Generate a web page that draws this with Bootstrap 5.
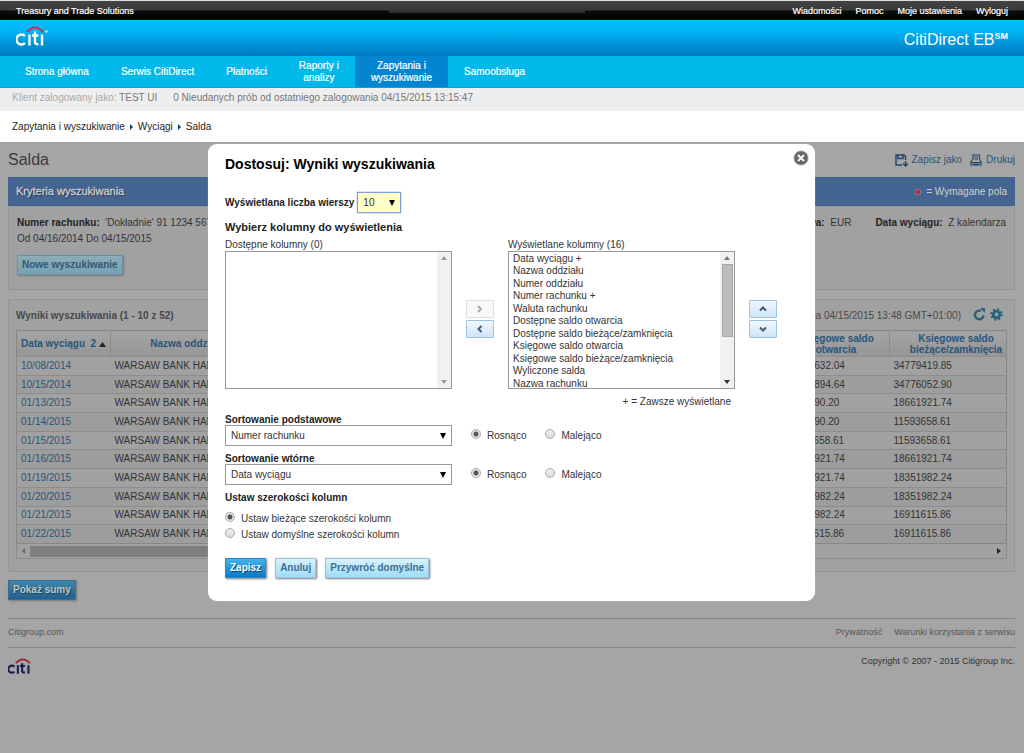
<!DOCTYPE html>
<html lang="pl">
<head>
<meta charset="utf-8">
<meta name="viewport" content="width=device-width, initial-scale=1">
<title>CitiDirect EB – Salda</title>
<link href="https://cdn.jsdelivr.net/npm/bootstrap@5.3.0/dist/css/bootstrap.min.css" rel="stylesheet">
<style>
body{font:11px/14px "Liberation Sans",Arial,sans-serif;color:#333;background:#a5a5a5}
a{text-decoration:none;color:inherit}
h1,h2,h3{margin:0}
.topbar{height:20px;border-top:1px solid #ddd;padding:0 16px;color:#fff;font-size:9px;line-height:20px;-webkit-text-stroke:.2px #fff;
 background:linear-gradient(#3a3a3a,#2a2a2a) 47% 9px/196px 3px no-repeat,linear-gradient(#444,#3a3a3a 45%,#0c0c0c 55%,#000)}
.brandbar{height:36px;padding:0 16px;color:#fff;background:linear-gradient(#00bfff,#00b4f5 30%,#0077c0)}
.product{font-size:16px;line-height:40px}
.product sup{font-size:9px;top:-6px;font-weight:700}
.mainnav{min-height:32px;background:#00b9ea;border-bottom:1px solid #00a5e0;color:#fff;padding-left:9px}
.mainnav a{display:flex;align-items:center;text-align:center;font-size:10px;line-height:12px;padding:1px 16px 0;-webkit-text-stroke:.2px #fff}
.mainnav a.active{background:#0485d1}
.loginbar{height:23px;background:#eee;color:#777;font-size:10px;line-height:20px;padding:0 12px}
.crumbs{height:32px;background:#fff;color:#222;font-size:10px;line-height:31px;padding:0 12px;border-bottom:1px solid #a0a0a0}
.crumbs svg{margin:0 5px}
.workspace{padding:0 9px 0 8px}
.page-title{font-size:16px;line-height:34px;color:#3c3c3c;font-weight:400}
.tools{color:#2b5478;font-size:10px}
.blue-head{height:29px;background:#446592;color:#d0d0d0;padding:0 8px;font-size:11px;line-height:28px}
.blue-head h2{font-size:11px;line-height:28px;font-weight:400;text-shadow:1px 1px 1px #223;-webkit-text-stroke:.3px #d0d0d0}
.pane{border:1px solid #959595;background:#a1a1a1;padding:8px}
.criteria{min-height:84px;font-size:10px;line-height:16px}
.criteria b{color:#222}
.act{font:bold 10px/16px "Liberation Sans",Arial,sans-serif;border:1px solid #9ac4dd;border-radius:0;padding:1px 4px;height:20px;color:#3f6f91;background:linear-gradient(#d8f2fd,#9fdcf8);box-shadow:1px 1px 2px #777}
.act-main{color:#fff;border-color:#2a8ccc;background:linear-gradient(#43b3ee,#0a78c6);text-shadow:1px 1px 1px #045}
.dim{color:#35586e;border-color:#6f8f9f;background:linear-gradient(#8cacb8,#73a3b5)}
.dim.act-main{color:#c6c6c6;border-color:#356f94;background:linear-gradient(#3f86ab,#245f8c)}
.results{margin-top:9px;min-height:273px;padding:7px}
.results-head{height:23px;font-size:10px;line-height:17px;color:#484848}
.results-head h2{font-size:10px;font-weight:700;line-height:17px}
.grid{width:100%;table-layout:fixed;height:214px;border:1px solid #878787;font-size:10px;line-height:14px;color:#333}
.grid th{height:26px;padding:0;text-align:center;color:#28557c;line-height:11px;background:linear-gradient(#a4a4a4,#969696);border-right:1px solid #8b8b8b}
.grid td{padding:0 4px;border-top:1px solid #8d8d8d;white-space:nowrap;overflow:hidden}
.grid td:first-child{color:#2b5478}
.grid tbody tr:nth-child(even){background:#9d9d9d}
.c-date{width:94px}.c-branch{width:154px}.c-open{width:107px}.c-cur{width:117px}
.grid th:last-child{padding-left:16px}
.hscroll{height:15px;border:1px solid #8b8b8b;border-top:0;padding:0 5px}
.hthumb{height:11px;background:#7f7f7f;width:80%}
.foot{border-top:1px solid #868686;font-size:9px;height:29px;line-height:27px;color:#555}
.dialogbox{position:absolute;top:1px;left:0;right:1px;margin:0 auto;width:607px;max-width:100%;background:#fff;border-radius:9px;box-shadow:0 0 1px #ccc;padding:12px 16px 23px 17px;color:#333;font-size:10px}
.dialogbox h1{font-size:14px;font-weight:700;line-height:16px;color:#000}
.shut{border:0;background:none;padding:0;line-height:0;margin:-6px -10px 0 0}
.dialogbox label,.dialogbox h3{font-size:10px;line-height:14px;font-weight:400;margin:0}
.dialogbox .strong{font-weight:700;color:#222}
.dialogbox .lead-line{font-size:11px}
.pick{appearance:none;border:1px solid #999;border-radius:0;color:#333;font-size:10px;line-height:14px;padding:2px 5px;height:21px;
 background:#fff url("data:image/svg+xml,%3Csvg xmlns='http://www.w3.org/2000/svg' width='6' height='6'%3E%3Cpath d='M0 0h6L3 6z'/%3E%3C/svg%3E") no-repeat right 5px center}
.pick-rows{width:44px;border:1px solid #7fa0d8;background-color:#ffffc8;box-shadow:0 0 1px #4d7fd0}
.wide{width:227px}
.listwrap{width:227px;height:138px;border:1px solid #999}
.listwrap select{appearance:none;border:0;outline:0;overflow:hidden;flex:1;min-width:0;height:136px;padding:1px 0 0;font-size:10px;color:#333;background:#fff}
.listwrap option{padding:0 4px;min-height:12px;line-height:12px}
.listwrap option:nth-child(even){min-height:13px;line-height:13px}
.vscroll{width:14px;background:#f1f1f1}
.vthumb{width:11px;height:73px;background:#bcbcbc;border:1px solid #a8a8a8}
.mover{width:28px;height:18px;border:1px solid #9cc3e6;border-radius:1px;background:linear-gradient(#f2f8fe,#cfe4f8);padding:0;line-height:0;color:#3d5d77}
.mover:disabled{background:#f8f8f8;border-color:#ddd;color:#aaa}
.dot{appearance:none;width:10px;height:10px;border:1px solid #aaa;border-radius:50%;background:linear-gradient(#eee,#ddd);margin:0;flex:none}
.dot:checked{background:radial-gradient(circle,#555 0 2px,#e6e6e6 3px)}
.order .dot{margin:0 6px 4px 19px}
.cap{display:block;height:12px}
</style>
</head>
<body class="d-flex flex-column min-vh-100">
<header>
  <div class="topbar d-flex justify-content-between">
    <span>Treasury and Trade Solutions</span>
    <nav class="d-flex" style="gap:14px"><a href="#">Wiadomości</a><a href="#">Pomoc</a><a href="#">Moje ustawienia</a><a href="#">Wyloguj</a></nav>
  </div>
  <div class="brandbar d-flex justify-content-between">
    <svg width="34" height="24" viewBox="0 0 34 24" class="mt-1" fill="none" stroke="#fff" stroke-width="2.4" role="img" aria-label="citi"><path d="M9 12a5 5 0 1 0 0 7M13.500 10.500v11M19 7.500V18q0 2.500 3.500 2.300M16 11.500h6.500M26 10.500v11"/><path d="M11 8Q19-1 27 8" stroke="#d32f45" stroke-width="2"/><circle cx="30.500" cy="7.500" r=".8" stroke-width="1"/></svg>
    <span class="product">CitiDirect EB<sup>SM</sup></span>
  </div>
  <nav class="mainnav d-flex">
    <a href="#">Strona główna</a><a href="#">Serwis CitiDirect</a><a href="#">Płatności</a><a href="#">Raporty i<br>analizy</a><a href="#" class="active">Zapytania i<br>wyszukiwanie</a><a href="#">Samoobsługa</a>
  </nav>
  <div class="loginbar d-flex gap-3"><span><span style="color:#aaa">Klient zalogowany jako:</span> TEST UI</span><span>0 Nieudanych prób od ostatniego zalogowania 04/15/2015 13:15:47</span></div>
  <nav class="crumbs"><a href="#">Zapytania i wyszukiwanie</a><svg width="3" height="6"><path d="M0 0v6l3-3z" fill="#013a78"/></svg><a href="#">Wyciągi</a><svg width="3" height="6"><path d="M0 0v6l3-3z" fill="#013a78"/></svg><span>Salda</span></nav>
</header>
<main class="workspace position-relative flex-grow-1">
  <div class="d-flex justify-content-between align-items-center">
    <h1 class="page-title">Salda</h1>
    <div class="tools d-flex gap-2">
      <a href="#" class="d-flex align-items-center gap-1"><svg width="13" height="13" fill="none" stroke="#24476a" stroke-width="1.500"><path d="M7 11H1V1h8l1.500 1.500V6M3 1v3.500h5V1M10.500 7v5M8 9.500l2.500 2.500 2.300-2.500"/></svg>Zapisz jako</a>
      <a href="#" class="d-flex align-items-center gap-1"><svg width="12" height="12" fill="none" stroke="#24476a" stroke-width="1.200"><path d="M3 6V1h6.500v5M4.500 3H8M4.500 5H8M2 6L1 8v3h10V8l-1-2M1 8.500h10M3 10h6"/></svg>Drukuj</a>
    </div>
  </div>
  <section>
    <div class="blue-head d-flex justify-content-between">
      <h2>Kryteria wyszukiwania</h2>
      <span style="font-size:10px" class="d-flex align-items-center gap-1"><svg width="8" height="8"><circle cx="4" cy="4" r="3.500" fill="#76708c"/><circle cx="4" cy="4" r="2" fill="#a82f42"/></svg>= Wymagane pola</span>
    </div>
    <div class="pane criteria">
      <div class="d-flex justify-content-between">
        <div><b>Numer rachunku:</b>&nbsp; 'Dokładnie' 91 1234 567<br>Od 04/16/2014 Do 04/15/2015</div>
        <div class="d-flex gap-4"><span><b>Waluta bazowa:</b>&nbsp; EUR</span><span><b>Data wyciągu:</b>&nbsp; Z kalendarza</span></div>
      </div>
      <button type="button" class="act dim mt-2">Nowe wyszukiwanie</button>
    </div>
  </section>
  <section class="pane results">
    <div class="results-head d-flex justify-content-between">
      <h2>Wyniki wyszukiwania (1 - 10 z 52)</h2>
      <div class="d-flex gap-1 align-items-start"><span class="me-2">(dane na 04/15/2015 13:48 GMT+01:00)</span>
        <svg width="13" height="14" fill="none" stroke="#245f7c" stroke-width="2.400"><path d="M10.500 8.500A4.300 4.300 0 1 1 8 4"/><path d="M7 1l5 0v5z" fill="#245f7c" stroke="none"/></svg>
        <svg width="13" height="14" fill="none" stroke="#245f7c" class="me-1"><circle cx="6.500" cy="7.500" r="3.200" stroke-width="2.600"/><circle cx="6.500" cy="7.500" r="5.200" stroke-width="2" stroke-dasharray="2 2.080"/></svg>
      </div>
    </div>
    <table class="grid">
      <colgroup><col class="c-date"><col class="c-branch"><col><col class="c-open"><col class="c-cur"></colgroup>
      <thead><tr><th>Data wyciągu &nbsp;2 <svg width="7" height="5"><path d="M0 5h7L3.500 0z" fill="#222"/></svg></th><th>Nazwa oddziału</th><th></th><th>Księgowe saldo otwarcia</th><th>Księgowe saldo bieżące/zamknięcia</th></tr></thead>
      <tbody>
        <tr><td>10/08/2014</td><td>WARSAW BANK HAN</td><td></td><td>34776632.04</td><td>34779419.85</td></tr>
        <tr><td>10/15/2014</td><td>WARSAW BANK HAN</td><td></td><td>34776894.64</td><td>34776052.90</td></tr>
        <tr><td>01/13/2015</td><td>WARSAW BANK HAN</td><td></td><td>1866190.20</td><td>18661921.74</td></tr>
        <tr><td>01/14/2015</td><td>WARSAW BANK HAN</td><td></td><td>1866190.20</td><td>11593658.61</td></tr>
        <tr><td>01/15/2015</td><td>WARSAW BANK HAN</td><td></td><td>11593658.61</td><td>11593658.61</td></tr>
        <tr><td>01/16/2015</td><td>WARSAW BANK HAN</td><td></td><td>18661921.74</td><td>18661921.74</td></tr>
        <tr><td>01/19/2015</td><td>WARSAW BANK HAN</td><td></td><td>18661921.74</td><td>18351982.24</td></tr>
        <tr><td>01/20/2015</td><td>WARSAW BANK HAN</td><td></td><td>18351982.24</td><td>18351982.24</td></tr>
        <tr><td>01/21/2015</td><td>WARSAW BANK HAN</td><td></td><td>18351982.24</td><td>16911615.86</td></tr>
        <tr><td>01/22/2015</td><td>WARSAW BANK HAN</td><td></td><td>16911615.86</td><td>16911615.86</td></tr>
      </tbody>
    </table>
    <div class="hscroll d-flex align-items-center justify-content-between"><svg width="4" height="6"><path d="M3 0v6L0 3z" fill="#666"/></svg><div class="hthumb me-auto ms-1"></div><svg width="4" height="6"><path d="M0 0v6l4-3z" fill="#222"/></svg></div>
  </section>
  <button type="button" class="act act-main dim mt-2">Pokaż sumy</button>
  <footer style="margin-top:18px">
    <div class="foot d-flex justify-content-between"><a href="#">Citigroup.com</a><span class="d-flex" style="gap:12px"><a href="#">Prywatność</a><a href="#">Warunki korzystania z serwisu</a></span></div>
    <div class="foot d-flex justify-content-between" style="color:#333">
      <svg width="24" height="20" viewBox="0 0 34 26" class="mt-2" fill="none" stroke="#1c1f4a" stroke-width="3" role="img" aria-label="citi"><path d="M9 14a5 5 0 1 0 0 7M14 12v12M20 9v11q0 2.500 4 2.300M17 13h7M29 12v12"/><path d="M11 9Q21-2 31 9" stroke="#a0283a" stroke-width="2.500"/></svg>
      <span>Copyright © 2007 - 2015 Citigroup Inc.</span>
    </div>
  </footer>

  <div class="dialogbox" role="dialog" aria-labelledby="dlg-title">
    <div class="d-flex justify-content-between align-items-start">
      <h1 id="dlg-title">Dostosuj: Wyniki wyszukiwania</h1>
      <button type="button" class="shut" aria-label="Zamknij"><svg width="16" height="16"><circle cx="8" cy="8" r="7" fill="#666" stroke="#999"/><path d="M5 5l6 6M11 5l-6 6" stroke="#fff" stroke-width="2"/></svg></button>
    </div>
    <div class="d-flex align-items-center" style="margin-top:20px;gap:3px"><label class="strong" for="rows">Wyświetlana liczba wierszy</label><select id="rows" class="pick pick-rows"><option>10</option></select></div>
    <h3 class="strong lead-line" style="margin-top:7px">Wybierz kolumny do wyświetlenia</h3>
    <div class="d-flex" style="margin-top:4px;gap:14px">
      <div><label class="d-block" for="avail" style="height:13px">Dostępne kolumny (0)</label>
        <div class="listwrap d-flex"><select id="avail" size="11"></select><div class="vscroll d-flex flex-column align-items-center justify-content-between py-1"><svg width="6" height="4"><path d="M0 4h6L3 0z" fill="#999"/></svg><svg width="6" height="4"><path d="M0 0h6L3 4z" fill="#999"/></svg></div></div>
      </div>
      <div class="d-flex flex-column" style="gap:2px;padding-top:62px"><button type="button" class="mover" disabled aria-label="Dodaj"><svg width="8" height="8" fill="none" stroke="currentColor" stroke-width="2"><path d="M2 1l3 3-3 3"/></svg></button><button type="button" class="mover" aria-label="Usuń"><svg width="8" height="8" fill="none" stroke="currentColor" stroke-width="2"><path d="M5.500 1l-3 3 3 3"/></svg></button></div>
      <div><label class="d-block" for="shown" style="height:13px">Wyświetlane kolumny (16)</label>
        <div class="listwrap d-flex"><select id="shown" size="11"><option>Data wyciągu +</option><option>Nazwa oddziału</option><option>Numer oddziału</option><option>Numer rachunku +</option><option>Waluta rachunku</option><option>Dostępne saldo otwarcia</option><option>Dostępne saldo bieżące/zamknięcia</option><option>Księgowe saldo otwarcia</option><option>Księgowe saldo bieżące/zamknięcia</option><option>Wyliczone salda</option><option>Nazwa rachunku</option></select><div class="vscroll d-flex flex-column align-items-center py-1"><svg width="6" height="4"><path d="M0 4h6L3 0z" fill="#777"/></svg><div class="vthumb mt-1"></div><svg class="mt-auto" width="6" height="4"><path d="M0 0h6L3 4z" fill="#333"/></svg></div></div>
        <div class="text-end pe-1" style="margin-top:6px">+ = Zawsze wyświetlane</div>
      </div>
      <div class="d-flex flex-column" style="gap:2px;padding-top:62px"><button type="button" class="mover" aria-label="W górę"><svg width="8" height="8" fill="none" stroke="currentColor" stroke-width="2"><path d="M1 5.500l3-3 3 3"/></svg></button><button type="button" class="mover" aria-label="W dół"><svg width="8" height="8" fill="none" stroke="currentColor" stroke-width="2"><path d="M1 2.500l3 3 3-3"/></svg></button></div>
    </div>
    <label class="strong cap" for="s1" style="margin-top:4px">Sortowanie podstawowe</label>
    <div class="order d-flex align-items-center"><select id="s1" class="pick wide"><option>Numer rachunku</option></select><input class="dot" type="radio" name="d1" id="d1a" checked><label for="d1a">Rosnąco</label><input class="dot" type="radio" name="d1" id="d1b"><label for="d1b">Malejąco</label></div>
    <label class="strong cap" for="s2" style="margin-top:6px">Sortowanie wtórne</label>
    <div class="order d-flex align-items-center"><select id="s2" class="pick wide"><option>Data wyciągu</option></select><input class="dot" type="radio" name="d2" id="d2a" checked><label for="d2a">Rosnąco</label><input class="dot" type="radio" name="d2" id="d2b"><label for="d2b">Malejąco</label></div>
    <h3 class="strong" style="margin-top:6px">Ustaw szerokości kolumn</h3>
    <div class="d-flex" style="gap:6px;margin-top:7px"><input class="dot" type="radio" name="w" id="wa" checked><label for="wa">Ustaw bieżące szerokości kolumn</label></div>
    <div class="d-flex" style="gap:6px;margin-top:2px"><input class="dot" type="radio" name="w" id="wb"><label for="wb">Ustaw domyślne szerokości kolumn</label></div>
    <div class="d-flex" style="gap:9px;margin-top:16px"><button type="button" class="act act-main">Zapisz</button><button type="button" class="act">Anuluj</button><button type="button" class="act">Przywróć domyślne</button></div>
  </div>
</main>
<script src="https://cdn.jsdelivr.net/npm/bootstrap@5.3.0/dist/js/bootstrap.bundle.min.js"></script>
</body>
</html>
